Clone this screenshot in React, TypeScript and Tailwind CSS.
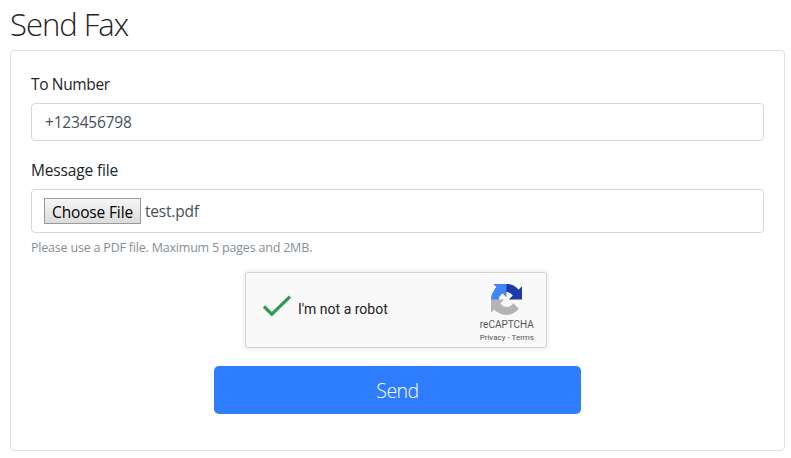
const RecaptchaLogo = () => (
  <svg viewBox="0 0 64 64" className="w-[31px] h-[31px]">
    <path
      fill="#1C3AA9"
      d="M64 31.955l-.033-1.37V4.687l-7.16 7.16C50.948 4.674 42.033.093 32.05.093c-10.4 0-19.622 4.96-25.458 12.64l11.736 11.86a15.55 15.55 0 0 1 4.754-5.334c2.05-1.6 4.952-2.906 8.968-2.906.485 0 .86.057 1.135.163 4.976.393 9.288 3.14 11.828 7.124l-8.307 8.307L64 31.953"
    />
    <path
      fill="#4285F4"
      d="M31.862.094l-1.37.033H4.594l7.16 7.16C4.58 13.147 0 22.06 0 32.046c0 10.4 4.96 19.622 12.64 25.458L24.5 45.768a15.55 15.55 0 0 1-5.334-4.754c-1.6-2.05-2.906-4.952-2.906-8.968 0-.485.057-.86.163-1.135.393-4.976 3.14-9.288 7.124-11.828l8.307 8.307L31.86.095"
    />
    <path
      fill="#B4B4B4"
      d="M.001 32.045l.033 1.37v25.898l7.16-7.16c5.86 7.173 14.774 11.754 24.76 11.754 10.4 0 19.622-4.96 25.458-12.64l-11.736-11.86a15.55 15.55 0 0 1-4.754 5.334c-2.05 1.6-4.952 2.906-8.968 2.906-.485 0-.86-.057-1.135-.163-4.976-.393-9.288-3.14-11.828-7.124l8.307-8.307c-10.522.04-22.4.066-27.295-.005"
    />
  </svg>
)

const Recaptcha = () => (
  <div className="ml-[214px] mt-[14px] flex w-[302px] h-[76px] rounded-[3px] border border-[#d3d3d3] bg-[#f9f9f9] shadow-[0_0_4px_1px_rgba(0,0,0,0.08)] font-[Roboto,sans-serif]">
    <svg viewBox="0 0 30 24" className="w-[30px] h-6 ml-4 mt-[21px]" fill="none" stroke="#2a9d50" strokeWidth="3.2">
      <path d="M2 12.5 L9.8 20.2 L28 2.6" />
    </svg>
    <span className="ml-[6px] mt-[28px] text-sm leading-[17px] text-[#222]">I'm not a robot</span>
    <div className="ml-auto mr-3 flex flex-col items-center pt-[11px] text-[#555]">
      <RecaptchaLogo />
      <span className="mt-1 text-[10px] leading-[12px]">reCAPTCHA</span>
      <span className="mt-[2px] text-[8px] leading-[10px]">Privacy - Terms</span>
    </div>
  </div>
)

export default function App() {
  return (
    <div className="h-[458px] bg-white pl-[10px] pr-[6px] pt-[6px] font-['Open_Sans',sans-serif] text-base text-[#212529]">
      <h1 className="h-11 text-[31px] leading-[37px] font-light tracking-[-1px]">Send Fax</h1>
      <form className="h-[401px] w-[775px] rounded border border-[#dfdfdf] px-5 pt-5">
        <label htmlFor="number" className="block h-8 pt-px text-[15.5px] leading-6 tracking-[-0.35px]">To Number</label>
        <input
          id="number"
          defaultValue="+123456798"
          className="block w-full h-[38px] rounded border border-[#d5d8db] pl-[13px] pr-3 text-[15.5px] tracking-[-0.2px] text-[#495057]"
        />
        <label className="mt-4 block h-8 pt-px text-[15.5px] leading-6 tracking-[-0.15px]">Message file</label>
        <div className="flex items-center h-11 rounded border border-[#d5d8db] px-3 text-[15.5px] text-[#495057]">
          <button type="button" className="w-[97px] h-[26px] border border-[#999] bg-linear-to-b from-[#f6f6f6] to-[#dcdcdc] pt-px leading-6 tracking-[-0.15px] text-black whitespace-nowrap">Choose File</button>
          <span className="ml-1 pt-0.5 tracking-[-0.2px]">test.pdf</span>
        </div>
        <small className="mt-1 block h-[21px] text-[12.5px] leading-[21px] tracking-[-0.2px] text-[#868e96]">Please use a PDF file. Maximum 5 pages and 2MB.</small>
        <Recaptcha />
        <button type="button" className="mx-auto mt-[18px] block w-[367px] h-12 rounded-[5px] bg-[#2f7dff] pt-0.5 text-[19.5px] font-light tracking-[-0.5px] text-white">Send</button>
      </form>
    </div>
  )
}
